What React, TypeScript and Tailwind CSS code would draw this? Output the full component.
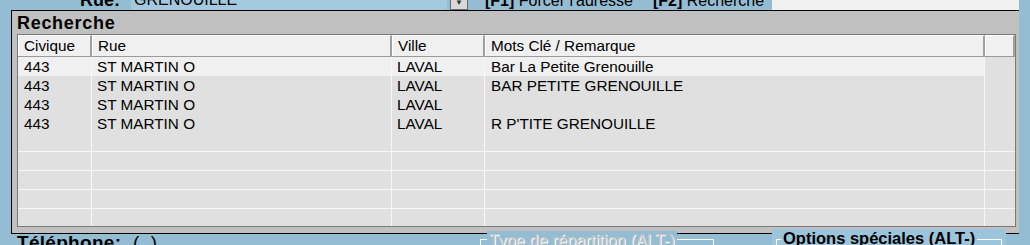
import React from "react";

type Row = { civique: string; rue: string; ville: string; mots: string };

const rows: Row[] = [
  { civique: "443", rue: "ST MARTIN O", ville: "LAVAL", mots: "Bar La Petite Grenouille" },
  { civique: "443", rue: "ST MARTIN O", ville: "LAVAL", mots: "BAR PETITE GRENOUILLE" },
  { civique: "443", rue: "ST MARTIN O", ville: "LAVAL", mots: "" },
  { civique: "443", rue: "ST MARTIN O", ville: "LAVAL", mots: "R P'TITE GRENOUILLE" },
];

const cols = "grid grid-cols-[74px_300px_93px_500px_1fr]";

export default function App() {
  const filled = [...rows, ...Array.from({ length: 6 }, () => null)];

  return (
    <div className="h-[245px] w-[1030px] overflow-hidden bg-[#94bdd4] font-['Liberation_Sans',Arial,sans-serif] text-black">
      {/* top strip, cut by the window */}
      <div className="flex h-[10px] overflow-hidden">
        <div className="mt-[-12px] flex h-[22px] w-[772px] items-end">
          <span className="ml-[80px] w-[51px] text-[18px] font-bold leading-[20px]">Rue:</span>
          <div className="flex h-[22px] w-[316px] items-end bg-[#a3c9de] pb-[1px] pl-[3px] text-[16px] leading-[18px]">
            GRENOUILLE
          </div>
          <div className="ml-[3px] flex h-[22px] w-[18px] items-end justify-center border border-[#6b6b6b] bg-[#d8d8d8] pb-[2px] text-[8px] leading-none text-[#333]">
            ▼
          </div>
          <span className="ml-[17px] text-[16px] leading-[19px]">
            <b>[F1]</b> Forcer l'adresse
          </span>
          <span className="ml-[20px] text-[16px] leading-[19px]">
            <b>[F2]</b> Recherche
          </span>
        </div>
        <div className="h-[10px] w-[247px] bg-[#f0f0f0]" />
      </div>

      {/* Recherche panel */}
      <div className="ml-[11px] flex h-[224px] w-[1008px] flex-col border-t border-b border-l border-black bg-[#c0c0c0]">
        <div className="ml-[5px] h-[23px] pt-[1px] text-[18px] font-bold leading-[22px] tracking-[0.7px]">Recherche</div>
        <div className="ml-[5px] flex h-[193px] w-[999px] flex-col overflow-hidden border border-[#7a7a7a]">
          <div className={`${cols} h-[22px] border-b border-[#9a9a9a] text-[15.3px] leading-[20px]`}>
            {["Civique", "Rue", "Ville", "Mots Clé / Remarque", ""].map((h, i) => (
              <div
                key={i}
                className="border-t border-l border-r-2 border-t-white border-l-white border-r-[#a0a0a0] bg-[#f0f0f0] pl-[5px]"
              >
                {h}
              </div>
            ))}
          </div>
          {filled.map((r, i) => {
            const bg = i === 0 ? "bg-[#f0f0f0]" : "bg-[#e0e0e0]";
            return (
              <div key={i} className={`${cols} h-[19px] shrink-0 text-[15.3px] leading-[18px]`}>
                <div className={`${bg} border-r border-b border-[#f7f7f7] pt-[1px] pl-[6px]`}>{r?.civique}</div>
                <div className={`${bg} border-r border-b border-[#f7f7f7] pt-[1px] pl-[5px]`}>{r?.rue}</div>
                <div className={`${bg} border-r border-b border-[#f7f7f7] pt-[1px] pl-[5px]`}>{r?.ville}</div>
                <div className={`${bg} border-r border-b border-[#f7f7f7] pt-[1px] pl-[6px]`}>{r?.mots}</div>
                <div className="border-b border-[#f7f7f7] bg-[#e0e0e0]" />
              </div>
            );
          })}
        </div>
      </div>

      {/* bottom strip, cut by the window */}
      <div className="flex h-[11px] items-start">
        <span className="ml-[17px] mt-[-1px] w-[463px] text-[19px] font-bold leading-[20px] tracking-[0.3px]">
          Téléphone: <span className="ml-[6px] font-normal">(&nbsp;&nbsp;)</span>
        </span>
        <div className="relative mt-[5px] h-[20px] w-[234px] border-t border-r border-l border-white">
          <span className="absolute left-[6px] top-[-9px] bg-[#94bdd4] px-[2px] text-[16.5px] leading-[18px] text-[#c4c4c4] [text-shadow:1px_1px_0_#ffffff]">
            Type de répartition (ALT-)
          </span>
        </div>
        <div className="relative ml-[58px] mt-[-5px] h-[20px] w-[234px] bg-[#9cc4da] pt-[10px]">
          <div className="relative ml-[4px] mr-[4px] h-[20px] border-t border-r border-l border-white">
            <span className="absolute left-[4px] top-[-11px] bg-[#9cc4da] px-[2px] text-[16.5px] font-bold leading-[18px]">
              Options spéciales (ALT-)
            </span>
          </div>
        </div>
      </div>
    </div>
  );
}
